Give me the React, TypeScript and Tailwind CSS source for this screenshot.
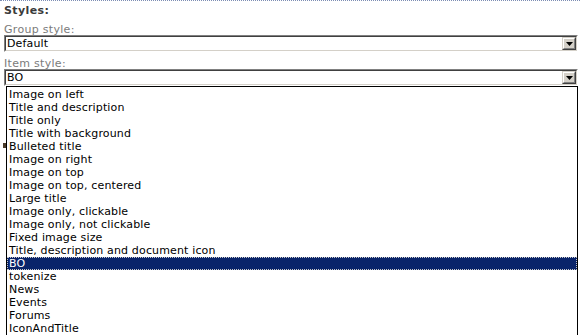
import React from 'react';

const itemStyles = [
  'Image on left',
  'Title and description',
  'Title only',
  'Title with background',
  'Bulleted title',
  'Image on right',
  'Image on top',
  'Image on top, centered',
  'Large title',
  'Image only, clickable',
  'Image only, not clickable',
  'Fixed image size',
  'Title, description and document icon',
  'BO',
  'tokenize',
  'News',
  'Events',
  'Forums',
  'IconAndTitle',
];

function DropButton() {
  return (
    <div className="w-[14px] h-[13px] shrink-0 bg-[#d4d0c8] border border-t-[#d4d0c8] border-l-[#d4d0c8] border-b-[#404040] border-r-[#404040]">
      <div className="w-full h-full flex items-center justify-center border border-t-white border-l-white border-b-[#808080] border-r-[#808080]">
        <svg width="7" height="4" viewBox="0 0 7 4">
          <polygon points="0,0 7,0 3.5,4" fill="#000" />
        </svg>
      </div>
    </div>
  );
}

function ClassicSelect({ value }: { value: string }) {
  return (
    <div className="ml-1 w-[574px] h-[17px] border border-t-[#808080] border-l-[#808080] border-b-white border-r-white">
      <div className="h-full flex items-center border border-t-[#404040] border-l-[#404040] border-b-[#d4d0c8] border-r-[#d4d0c8] bg-white">
        <div className="flex-1 pl-[1px] leading-[13px] text-black">{value}</div>
        <DropButton />
      </div>
    </div>
  );
}

export default function App() {
  const selected = 'BO';

  return (
    <div className="relative w-[580px] h-[335px] overflow-hidden bg-white font-['DejaVu_Sans','Verdana',sans-serif] text-[11px] tracking-[0.15px]">
      <div className="border-t border-dotted border-[#7d8db3]" />
      <div className="pl-1 mt-[3px] h-[14px] leading-[14px] font-bold text-[#3a3a3a] tracking-[0.4px]">Styles:</div>
      <div className="pl-1 mt-[7px] h-[10px] leading-[10px] text-[#7b7b7b] tracking-[0.3px]">Group style:</div>
      <ClassicSelect value="Default" />
      <div className="pl-1 mt-[7px] h-[10px] leading-[10px] text-[#7b7b7b] tracking-[0.3px]">Item style:</div>
      <ClassicSelect value="BO" />

      <div className="ml-[6px] w-[572px] border border-black bg-white pt-[1px]">
        {itemStyles.map((name) => (
          <div
            key={name}
            className={
              name === selected
                ? 'h-[13px] leading-[11px] pl-[1px] bg-[#0a246a] text-white border border-dotted border-[#c9c9c9]'
                : 'h-[13px] leading-[13px] pl-[2px] text-black border-0'
            }
          >
            {name}
          </div>
        ))}
      </div>

      <div className="absolute left-[3px] top-[143px] w-[3px] h-[5px] bg-[#4a3b2a]" />
    </div>
  );
}
